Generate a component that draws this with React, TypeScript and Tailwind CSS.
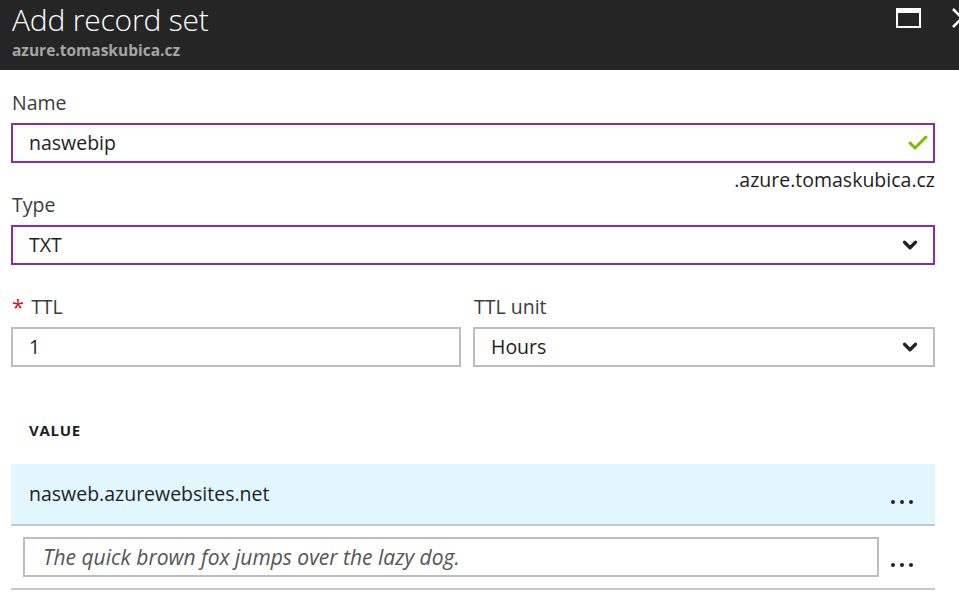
import { Check, ChevronDown } from 'lucide-react'

const font = { fontFamily: '"Segoe UI", "Open Sans", "Noto Sans", sans-serif' }

function Dots() {
  return (
    <div className="flex gap-[5px] items-center">
      <span className="w-[4px] h-[4px] rounded-full bg-[#222]" />
      <span className="w-[4px] h-[4px] rounded-full bg-[#222]" />
      <span className="w-[4px] h-[4px] rounded-full bg-[#222]" />
    </div>
  )
}

export default function App() {
  return (
    <div className="w-[959px] h-[610px] bg-white overflow-hidden text-[#1e1e1e]" style={font}>
      {/* Blade header */}
      <div className="h-[70px] bg-[#252525] flex justify-between pl-[12px] overflow-hidden">
        <div className="flex flex-col">
          <h1 className="text-[30px] font-light text-white leading-[36px] mt-[2px] tracking-[-0.2px]">
            Add record set
          </h1>
          <p className="text-[15.5px] font-bold text-[#a6a6a6] leading-[18px] mt-[3px]">
            azure.tomaskubica.cz
          </p>
        </div>
        <div className="w-[63px] shrink-0 flex items-start gap-[31px] pt-[8px]">
          <div className="w-[25px] h-[20px] shrink-0 border-white border-[2px] border-t-[5px]" />
          <svg width="20" height="20" viewBox="0 0 20 20" className="shrink-0">
            <path d="M1 1 L19 19 M19 1 L1 19" stroke="white" strokeWidth="2.5" fill="none" />
          </svg>
        </div>
      </div>

      <div className="px-[11px] w-[946px]">
        {/* Name */}
        <label className="block text-[19.5px] text-[#3c3c3c] leading-[24px] mt-[21px] ml-[1px]">Name</label>
        <div className="mt-[8px] h-[40px] border-2 border-[#8a2da5] flex items-center justify-between pl-[16px] pr-[3px]">
          <span className="text-[19.5px] leading-[24px]">naswebip</span>
          <Check className="w-[24px] h-[24px] text-[#7fba00]" strokeWidth={3} />
        </div>
        <p className="text-right text-[19.5px] leading-[22px] mt-[6px]">.azure.tomaskubica.cz</p>

        {/* Type */}
        <label className="block text-[19.5px] text-[#3c3c3c] leading-[24px] mt-[2px] ml-[1px]">Type</label>
        <div className="mt-[8px] h-[40px] border-2 border-[#8a2da5] flex items-center justify-between pl-[16px] pr-[12px]">
          <span className="text-[19.5px] leading-[24px]">TXT</span>
          <ChevronDown className="w-[22px] h-[22px] text-[#222]" strokeWidth={3.5} />
        </div>

        {/* TTL */}
        <div className="flex gap-[12px] mt-[30px]">
          <div className="w-[450px] shrink-0">
            <label className="flex items-start gap-[7px] text-[19.5px] text-[#3c3c3c] leading-[24px] ml-[1px]">
              <span className="text-[#e81123] text-[22px] leading-[22px]">*</span>
              <span>TTL</span>
            </label>
            <div className="mt-[8px] h-[40px] border-2 border-[#bdbdbd] flex items-center pl-[16px]">
              <span className="text-[19.5px] leading-[24px]">1</span>
            </div>
          </div>
          <div className="flex-1">
            <label className="block text-[19.5px] text-[#3c3c3c] leading-[24px] ml-[1px]">TTL unit</label>
            <div className="mt-[8px] h-[40px] border-2 border-[#bdbdbd] flex items-center justify-between pl-[16px] pr-[12px]">
              <span className="text-[19.5px] leading-[24px]">Hours</span>
              <ChevronDown className="w-[22px] h-[22px] text-[#222]" strokeWidth={3.5} />
            </div>
          </div>
        </div>

        {/* Values */}
        <p className="text-[15px] font-bold tracking-[0.7px] leading-[20px] mt-[53px] pl-[18px]">VALUE</p>
        <div className="mt-[24px] h-[62px] bg-[#e2f6fd] border-b-2 border-[#c8c8c8] flex items-center justify-between pl-[18px] pr-[22px]">
          <span className="text-[19.5px] leading-[24px]">nasweb.azurewebsites.net</span>
          <div className="mt-[16px]">
            <Dots />
          </div>
        </div>
        <div className="h-[64px] border-b-2 border-[#c8c8c8] flex items-center pl-[12px] pr-[22px] gap-[10px]">
          <div className="flex-1 h-[40px] border-2 border-[#bdbdbd] flex items-center pl-[18px]">
            <span className="text-[21px] leading-[24px] italic text-[#555]">The quick brown fox jumps over the lazy dog.</span>
          </div>
          <div className="mt-[16px] ml-[2px]">
            <Dots />
          </div>
        </div>
      </div>
    </div>
  )
}
